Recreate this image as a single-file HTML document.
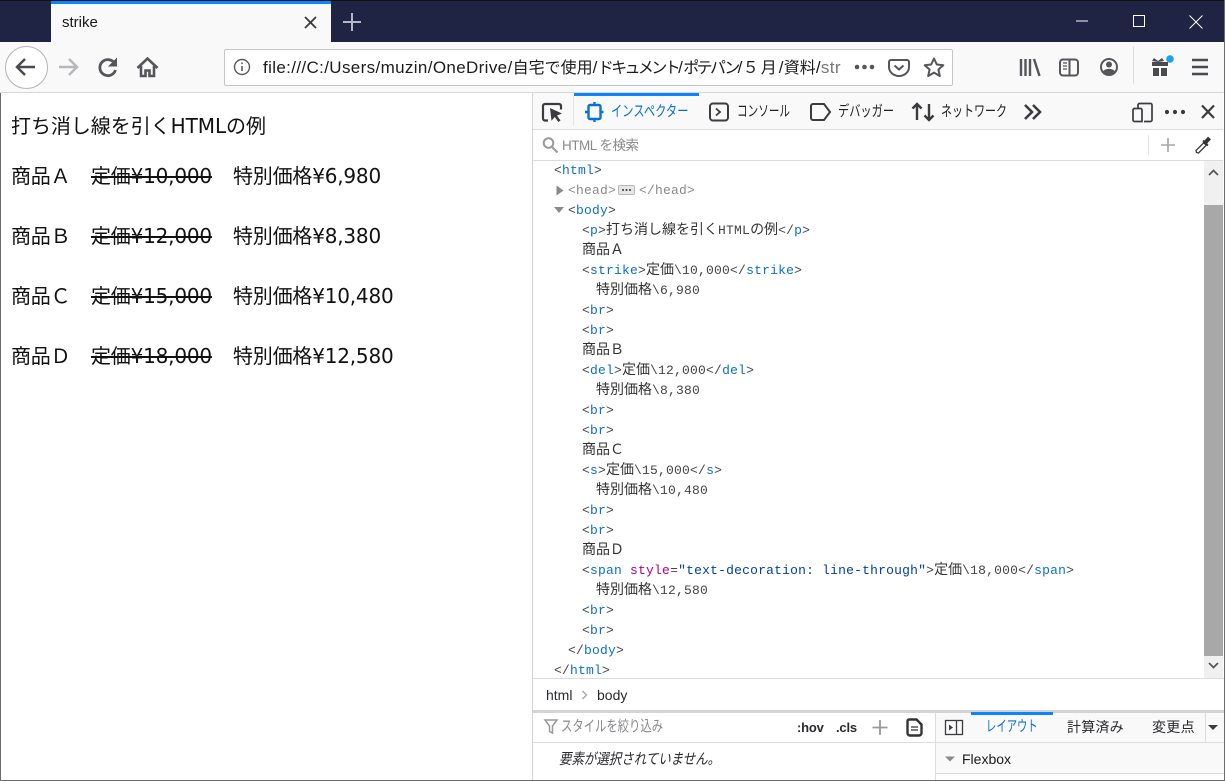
<!DOCTYPE html>
<html lang="ja"><head><meta charset="utf-8"><title>strike</title>
<style>
*{box-sizing:border-box}
html,body{margin:0;padding:0;width:1225px;height:781px;overflow:hidden;background:#fff}
body{position:relative;font-family:"Liberation Sans","Noto Sans CJK JP",sans-serif;color:#0c0c0d}
.a{position:absolute}
.t{position:absolute;white-space:pre;line-height:20px}
.pg{position:absolute;white-space:pre;font-family:"DejaVu Sans","Noto Sans CJK JP",sans-serif;font-size:20px;line-height:28px;color:#111;letter-spacing:-.2px}
.pg s{text-decoration:line-through}
.c{position:absolute;margin-top:1px;white-space:pre;font-family:"Liberation Mono","Noto Sans CJK JP",monospace;font-size:13px;line-height:20px;color:#45454a;letter-spacing:.2px}
.c b{font-weight:400;color:#0b6fd0}
.c i{font-style:normal;color:#b5007f}
.c u{text-decoration:none;color:#003eaa}
.c em{font-style:normal;color:#8a8a8e}
.c span{font-size:14px;letter-spacing:0;color:#333}
.ui{font-family:"Liberation Sans","Noto Sans CJK JP",sans-serif;font-size:15px;color:#222;transform-origin:0 50%}
.url span{font-size:16px}
svg{position:absolute;overflow:visible}
</style></head><body>

<!-- title bar -->
<div class="a" style="left:0;top:0;width:1225px;height:42px;background:#1f2344"></div>
<div class="a" style="left:0;top:0;width:1225px;height:1px;background:#111"></div>
<div class="a" style="left:51px;top:1px;width:280px;height:41px;background:#f9f9fa"></div>
<div class="a" style="left:51px;top:1px;width:280px;height:3px;background:#0a84ff"></div>
<div class="t" style="left:62px;top:13px;font-size:15px;color:#18181a">strike</div>
<svg style="left:0;top:0" width="1225" height="42" fill="none">
<path d="M305 17l11 11M316 17l-11 11" stroke="#3a3a3e" stroke-width="1.8"/>
<path d="M352 13v18M343 22h18" stroke="#b5b7c6" stroke-width="2"/>
<path d="M1076 21h12" stroke="#fff" stroke-width="1"/>
<rect x="1133.500" y="15.500" width="11" height="11" stroke="#fff" stroke-width="1"/>
<path d="M1189.500 15.500l13 13M1202.500 15.500l-13 13" stroke="#fff" stroke-width="1"/>
</svg>

<!-- nav bar -->
<div class="a" style="left:0;top:42px;width:1225px;height:51px;background:#f9f9fa;border-bottom:1px solid #d8d8da"></div>
<div class="a" style="left:5px;top:46px;width:43px;height:43px;border-radius:50%;background:#fff;border:1px solid #b4b4b6"></div>
<svg style="left:0;top:42px" width="230" height="50" fill="none">
<path d="M35 25H18M25 17l-8 8 8 8" stroke="#4a4a4f" stroke-width="2.500"/>
<path d="M77 25H59M69 17l8 8-8 8" stroke="#b8b8ba" stroke-width="2.500"/>
<path d="M115 22a8 8 0 1 0 .5 6" stroke="#55555a" stroke-width="2.800"/>
<path d="M117 15.500v9h-9z" fill="#55555a"/>
<path d="M137.500 26l10-9.500 10 9.500M141 24v10h4.500v-5.500h4V34h4.500V24" stroke="#55555a" stroke-width="2.600"/>
</svg>
<div class="a" style="left:224px;top:49px;width:729px;height:37px;background:#fff;border:1px solid #c6c6c8;border-radius:2px"></div>
<svg style="left:225px;top:45px" width="40" height="45" fill="none">
<circle cx="17" cy="22" r="7.500" stroke="#5a5a5e" stroke-width="1.400"/>
<path d="M17 21v5" stroke="#5a5a5e" stroke-width="1.600"/><path d="M17 17.500v1.600" stroke="#5a5a5e" stroke-width="1.600"/>
</svg>
<div class="t url" style="left:263px;top:58px;width:583px;overflow:hidden;font-size:17px;color:#1c1c1e;letter-spacing:.36px">file:///C:/Users/muzin/OneDrive/<span style="letter-spacing:0">自宅で使用</span>/<span style="letter-spacing:-2.6px">ドキュメント</span>/<span style="letter-spacing:-2.6px">ポテパン</span>/<span style="letter-spacing:2px">５月</span>/<span style="letter-spacing:0">資料</span>/<b style="font-weight:400;color:#77777a">str</b></div>
<svg style="left:840px;top:45px" width="110" height="45" fill="none">
<circle cx="17" cy="22" r="2.300" fill="#55555a"/><circle cx="24.500" cy="22" r="2.300" fill="#55555a"/><circle cx="32" cy="22" r="2.300" fill="#55555a"/>
<path d="M51 15h16a2 2 0 0 1 2 2v5a10 9 0 0 1-20 0v-5a2 2 0 0 1 2-2z" stroke="#55555a" stroke-width="2"/>
<path d="M54.500 20.500l4.500 4 4.500-4" stroke="#55555a" stroke-width="2"/>
<path d="M94 13.500l2.800 6 6.500.7-4.900 4.300 1.400 6.500-5.800-3.400-5.800 3.400 1.400-6.500-4.900-4.300 6.500-.7z" stroke="#55555a" stroke-width="2" stroke-linejoin="round"/>
</svg>
<svg style="left:1010px;top:45px" width="215" height="45" fill="none">
<path d="M11 14v17M15.500 14v17M20 14v17M24 14l5.500 17" stroke="#55555a" stroke-width="2.400"/>
<rect x="50" y="14.500" width="18" height="16" rx="3" stroke="#55555a" stroke-width="2"/>
<path d="M59.500 15v15" stroke="#55555a" stroke-width="2"/><path d="M53 18h4M53 21h4M53 24h4" stroke="#55555a" stroke-width="1.200"/>
<circle cx="99" cy="22" r="8" stroke="#55555a" stroke-width="2"/>
<circle cx="99" cy="19.500" r="3" fill="#55555a"/><path d="M93 26.500c2-3.500 10-3.500 12 0l-3 2.500h-6z" fill="#55555a"/>
<path d="M123.500 1.500v37" stroke="#dcdcde" stroke-width="1"/>
<path d="M142 17h16v4h-16zM143 23h6v8h-6zM151 23h6v8h-6z" fill="#4a4a4f"/>
<path d="M144 13l4 3 4-3 2 3-6 1-6-1z" fill="#4a4a4f"/>
<circle cx="160" cy="14" r="3.800" fill="#1ea0f0"/>
<path d="M182 15h16M182 22h16M182 29h16" stroke="#4a4a4f" stroke-width="2.400"/>
</svg>

<!-- page -->
<div class="a" style="left:0;top:93px;width:1px;height:688px;background:#6b6b6b"></div>
<div class="pg" style="left:11px;top:112px;letter-spacing:-.05px">打ち消し線を引くHTMLの例</div>
<div class="pg" style="left:11px;top:162px">商品Ａ</div><div class="pg" style="left:91px;top:162px"><s>定価¥10,000</s></div><div class="pg" style="left:233px;top:162px">特別価格¥6,980</div>
<div class="pg" style="left:11px;top:222px">商品Ｂ</div><div class="pg" style="left:91px;top:222px"><s>定価¥12,000</s></div><div class="pg" style="left:233px;top:222px">特別価格¥8,380</div>
<div class="pg" style="left:11px;top:282px">商品Ｃ</div><div class="pg" style="left:91px;top:282px"><s>定価¥15,000</s></div><div class="pg" style="left:233px;top:282px">特別価格¥10,480</div>
<div class="pg" style="left:11px;top:342px">商品Ｄ</div><div class="pg" style="left:91px;top:342px"><s>定価¥18,000</s></div><div class="pg" style="left:233px;top:342px">特別価格¥12,580</div>

<!-- devtools -->
<div class="a" style="left:532px;top:93px;width:1px;height:688px;background:#d4d4d6"></div>
<div class="a" style="left:533px;top:93px;width:692px;height:37px;background:#f9f9fa;border-bottom:1px solid #dcdcde"></div>
<div class="a" style="left:574px;top:93px;width:125px;height:3px;background:#0a84ff"></div>
<div class="a" style="left:573px;top:96px;width:1px;height:30px;background:#e4e4e6"></div>
<svg style="left:533px;top:93px" width="692" height="37" fill="none">
<path d="M15 27.500h-3a2 2 0 0 1-2-2V13a2 2 0 0 1 2-2h14a2 2 0 0 1 2 2v3.500" stroke="#3c3c40" stroke-width="2.200"/>
<path d="M17 15l12 5.500-5 2 3.500 5-2.200 1.500-3.500-5-3.300 3.700z" fill="#3c3c40"/>
<rect x="55.500" y="12" width="12" height="14" stroke="#0a6fd8" stroke-width="2.400" rx="1.500"/>
<path d="M61.500 9v3M61.500 26v3M52 19h3.500M67.500 19h3" stroke="#0a6fd8" stroke-width="2.400"/>
<rect x="177" y="10.500" width="18" height="17" rx="3" stroke="#3c3c40" stroke-width="2"/>
<path d="M183 15.500l4 3.500-4 3.500" stroke="#3c3c40" stroke-width="1.800"/>
<path d="M280 11h11l6 8-6 8h-11a2 2 0 0 1-2-2V13a2 2 0 0 1 2-2z" stroke="#3c3c40" stroke-width="2"/>
<path d="M384 27V11M379.500 15.500l4.500-4.500 4.500 4.500M396 11v16M391.500 22.500l4.500 4.500 4.500-4.500" stroke="#3c3c40" stroke-width="2.400"/>
<path d="M492 12l7 7-7 7M500 12l7 7-7 7" stroke="#3c3c40" stroke-width="2.600"/>
<path d="M605 15.500v-3.500a1.500 1.500 0 0 1 1.500-1.500H617.500a1.500 1.500 0 0 1 1.500 1.500v15a1.500 1.500 0 0 1-1.500 1.500H611M601.500 15.500h6a1.500 1.500 0 0 1 1.500 1.500v11.500h-7.500a1.500 1.500 0 0 1-1.500-1.500V17a1.500 1.500 0 0 1 1.500-1.500z" stroke="#3c3c40" stroke-width="1.700"/>
<circle cx="634" cy="19" r="2.100" fill="#3c3c40"/><circle cx="642" cy="19" r="2.100" fill="#3c3c40"/><circle cx="650" cy="19" r="2.100" fill="#3c3c40"/>
<path d="M669 12.500l12 12.500M681 12.500l-12 12.500" stroke="#3c3c40" stroke-width="2.200"/>
</svg>
<div class="t ui" style="left:611px;top:102px;color:#0a6fd8;transform:scaleX(.752)">インスペクター</div>
<div class="t ui" style="left:737px;top:102px;transform:scaleX(.707)">コンソール</div>
<div class="t ui" style="left:838px;top:102px;transform:scaleX(.747)">デバッガー</div>
<div class="t ui" style="left:941px;top:102px;transform:scaleX(.733)">ネットワーク</div>

<!-- search row -->
<div class="a" style="left:533px;top:130px;width:692px;height:31px;background:#fff;border-bottom:1px solid #dcdcde"></div>
<svg style="left:533px;top:130px" width="692" height="31" fill="none">
<circle cx="15.500" cy="13" r="4.800" stroke="#9a9a9d" stroke-width="2"/><path d="M19 17l5.500 5.500" stroke="#9a9a9d" stroke-width="2"/>
<path d="M615.500 5v20" stroke="#e4e4e6"/>
<path d="M635 8v14M628 15h14" stroke="#a5a5a8" stroke-width="1.600"/>
<path d="M663.500 22.500l-.5-2 8.500-8.500 2.500 2.500-8.500 8.500z" stroke="#3c3c40" stroke-width="1.300"/>
<path d="M671 14l5.500-6" stroke="#333" stroke-width="4"/><path d="M670 10.500l5 5" stroke="#333" stroke-width="1.600"/>
</svg>
<div class="t" style="left:562px;top:136px;font-size:13.500px;color:#8a8a8e;letter-spacing:-.5px">HTML を検索</div>

<!-- scrollbar -->
<div class="a" style="left:1204px;top:161px;width:19px;height:518px;background:#f0f0f0"></div>
<div class="a" style="left:1204px;top:205px;width:19px;height:451px;background:#a8a8a8"></div>
<svg style="left:1204px;top:161px" width="19" height="518" fill="none">
<path d="M5 14l4.500-4.500L14 14" stroke="#555" stroke-width="1.700"/>
<path d="M5 502l4.500 4.500L14 502" stroke="#555" stroke-width="1.700"/>
</svg>
<div class="a" style="left:1223px;top:93px;width:2px;height:688px;background:#fff"></div>
<div class="a" style="left:1224px;top:0;width:1px;height:781px;background:#6b6b6b"></div>

<!-- code -->
<div class="c" style="left:554px;top:160px">&lt;<b>html</b>&gt;</div>
<div class="c" style="left:568px;top:180px"><em>&lt;head&gt;</em></div>
<div class="a" style="left:618px;top:185px;width:17px;height:10px;background:#e6e6e8;border:1px solid #b8b8ba;border-radius:2px"></div>
<svg style="left:618px;top:185px" width="17" height="10"><circle cx="5" cy="5" r="1" fill="#333"/><circle cx="8.500" cy="5" r="1" fill="#333"/><circle cx="12" cy="5" r="1" fill="#333"/></svg>
<div class="c" style="left:639px;top:180px"><em>&lt;/head&gt;</em></div>
<svg style="left:554px;top:184px" width="12" height="32"><path d="M2.500 1.500l7 5-7 5z" fill="#8a8a8e"/><path d="M0 23h10l-5 6z" fill="#8a8a8e"/></svg>
<div class="c" style="left:568px;top:200px">&lt;<b>body</b>&gt;</div>
<div class="c" style="left:582px;top:220px">&lt;<b>p</b>&gt;<span>打ち消し線を引く</span>HTML<span>の例</span>&lt;/<b>p</b>&gt;</div>
<div class="c" style="left:582px;top:240px"><span>商品Ａ</span></div>
<div class="c" style="left:582px;top:260px">&lt;<b>strike</b>&gt;<span>定価</span>\10,000&lt;/<b>strike</b>&gt;</div>
<div class="c" style="left:596px;top:280px"><span>特別価格</span>\6,980</div>
<div class="c" style="left:582px;top:300px">&lt;<b>br</b>&gt;</div>
<div class="c" style="left:582px;top:320px">&lt;<b>br</b>&gt;</div>
<div class="c" style="left:582px;top:340px"><span>商品Ｂ</span></div>
<div class="c" style="left:582px;top:360px">&lt;<b>del</b>&gt;<span>定価</span>\12,000&lt;/<b>del</b>&gt;</div>
<div class="c" style="left:596px;top:380px"><span>特別価格</span>\8,380</div>
<div class="c" style="left:582px;top:400px">&lt;<b>br</b>&gt;</div>
<div class="c" style="left:582px;top:420px">&lt;<b>br</b>&gt;</div>
<div class="c" style="left:582px;top:440px"><span>商品Ｃ</span></div>
<div class="c" style="left:582px;top:460px">&lt;<b>s</b>&gt;<span>定価</span>\15,000&lt;/<b>s</b>&gt;</div>
<div class="c" style="left:596px;top:480px"><span>特別価格</span>\10,480</div>
<div class="c" style="left:582px;top:500px">&lt;<b>br</b>&gt;</div>
<div class="c" style="left:582px;top:520px">&lt;<b>br</b>&gt;</div>
<div class="c" style="left:582px;top:540px"><span>商品Ｄ</span></div>
<div class="c" style="left:582px;top:560px">&lt;<b>span</b> <i>style</i>=<u>"text-decoration: line-through"</u>&gt;<span>定価</span>\18,000&lt;/<b>span</b>&gt;</div>
<div class="c" style="left:596px;top:580px"><span>特別価格</span>\12,580</div>
<div class="c" style="left:582px;top:600px">&lt;<b>br</b>&gt;</div>
<div class="c" style="left:582px;top:620px">&lt;<b>br</b>&gt;</div>
<div class="c" style="left:568px;top:640px">&lt;/<b>body</b>&gt;</div>
<div class="c" style="left:554px;top:660px">&lt;/<b>html</b>&gt;</div>

<!-- breadcrumbs -->
<div class="a" style="left:533px;top:678px;width:691px;height:1px;background:#dcdcde"></div>
<div class="t" style="left:546px;top:685px;font-size:14px;color:#2a2a2e">html</div>
<svg style="left:581px;top:690px" width="8" height="10" fill="none"><path d="M1.500 1l4 4-4 4" stroke="#a5a5a8" stroke-width="1.400"/></svg>
<div class="t" style="left:597px;top:685px;font-size:14px;color:#2a2a2e">body</div>
<div class="a" style="left:533px;top:710px;width:691px;height:3px;background:#d4d4d6"></div>

<!-- rules panel -->
<svg style="left:533px;top:713px" width="400" height="30" fill="none">
<path d="M12 7h12l-4.500 6v7l-3-1.500V13z" stroke="#9a9a9d" stroke-width="1.500"/>
<path d="M347 7v15M339.500 14.500h15" stroke="#9a9a9d" stroke-width="1.800"/>
</svg>
<div class="t" style="left:561px;top:717px;font-size:15px;color:#8a8a8e;transform-origin:0 50%;transform:scaleX(.756)">スタイルを絞り込み</div>
<div class="t" style="left:797px;top:718px;font-size:13px;color:#2a2a2e;font-weight:700;letter-spacing:-.2px">:hov</div>
<div class="t" style="left:836px;top:718px;font-size:13px;color:#2a2a2e;font-weight:700;letter-spacing:-.2px">.cls</div>
<svg style="left:906px;top:718px" width="18" height="20" fill="none">
<path d="M3 1.500h7.500l5 5V15a2.500 2.500 0 0 1-2.500 2.500H4A2.500 2.500 0 0 1 1.500 15V3A1.500 1.500 0 0 1 3 1.500z" stroke="#333" stroke-width="2.400"/>
<path d="M5 9h7M5 12h7" stroke="#333" stroke-width="1.200"/>
</svg>
<div class="a" style="left:533px;top:742px;width:403px;height:1px;background:#dcdcde"></div>
<div class="t" style="left:559px;top:750px;font-size:15px;font-style:italic;color:#2a2a2e;transform-origin:0 50%;transform:scaleX(.83)">要素が選択されていません。</div>

<!-- right side panel -->
<div class="a" style="left:935px;top:713px;width:1px;height:68px;background:#dcdcde"></div>
<div class="a" style="left:936px;top:713px;width:288px;height:30px;background:#f9f9fa;border-bottom:1px solid #dcdcde"></div>
<div class="a" style="left:936px;top:743px;width:288px;height:31px;background:#f9f9fa;border-bottom:1px solid #dcdcde"></div>
<div class="a" style="left:971px;top:712px;width:82px;height:3px;background:#0a84ff"></div>
<div class="a" style="left:1205px;top:713px;width:1px;height:29px;background:#dcdcde"></div>
<svg style="left:936px;top:713px" width="288" height="60" fill="none">
<rect x="9.500" y="7.500" width="17" height="14" stroke="#3c3c40" stroke-width="1.300"/>
<path d="M20.500 7.500v14" stroke="#3c3c40" stroke-width="1.300"/><path d="M13 11.500l4 3-4 3z" fill="#3c3c40"/>
<path d="M272 12h10l-5 5z" fill="#3c3c40"/>
<path d="M9 43.500h10l-5 5z" fill="#8a8a8e"/>
</svg>
<div class="t" style="left:986px;top:717px;font-size:15px;color:#0a6fd8;transform-origin:0 50%;transform:scaleX(.69)">レイアウト</div>
<div class="t" style="left:1067px;top:717px;font-size:14px;color:#2a2a2e;letter-spacing:.2px">計算済み</div>
<div class="t" style="left:1152px;top:717px;font-size:14px;color:#2a2a2e;letter-spacing:.3px">変更点</div>
<div class="t" style="left:962px;top:749px;font-size:14px;color:#1c1c1e">Flexbox</div>

<div class="a" style="left:0;top:780px;width:1225px;height:1px;background:#6b6b6b"></div>
</body></html>
